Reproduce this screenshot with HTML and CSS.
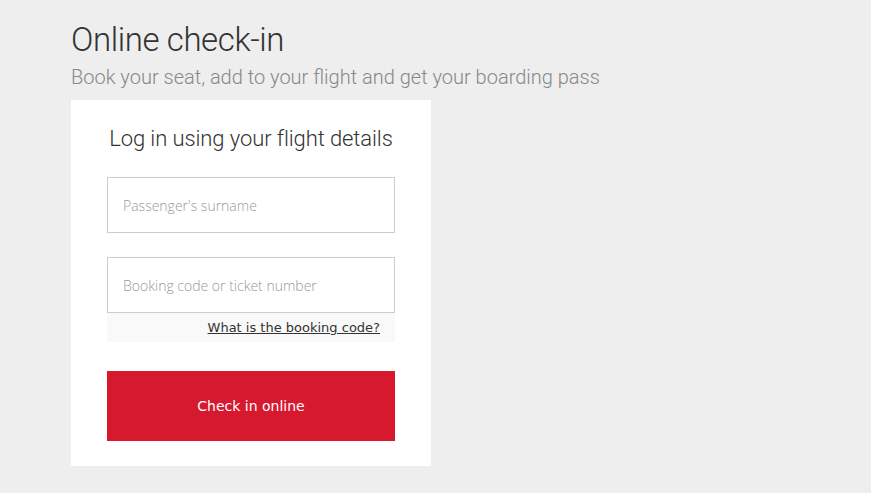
FILE: index.html
```html
<!DOCTYPE html>
<html lang="en">
<head>
<meta charset="utf-8">
<title>Online check-in</title>
<link rel="stylesheet" href="styles.css">
</head>
<body>
<main class="page">
  <h1 class="title">Online check-in</h1>
  <p class="subtitle">Book your seat, add to your flight and get your boarding pass</p>
  <section class="card">
    <h2 class="card-title">Log in using your flight details</h2>
    <form class="form">
      <input class="field" type="text" placeholder="Passenger's surname">
      <div class="field-group">
        <input class="field" type="text" placeholder="Booking code or ticket number">
        <div class="help"><a href="#" class="help-link">What is the booking code?</a></div>
      </div>
      <button type="button" class="submit">Check in online</button>
    </form>
  </section>
</main>
</body>
</html>
```
FILE: styles.css
```css
html, body {
  margin: 0;
  padding: 0;
  background: #eeeeee;
}
body {
  font-family: Roboto, "Open Sans", sans-serif;
}
.page {
  padding: 18px 0 0 71px;
  width: 600px;
}
.title {
  margin: 0;
  font-weight: 300;
  font-size: 33px;
  letter-spacing: -0.4px;
  line-height: 44px;
  color: #333333;
}
.subtitle {
  margin: 0 0 8px;
  font-weight: 300;
  font-size: 20px;
  line-height: 30px;
  color: #888888;
}
.card {
  width: 288px;
  background: #ffffff;
  padding: 24px 36px 25px;
}
.card-title {
  margin: 0 0 23px;
  text-align: center;
  white-space: nowrap;
  font-weight: 300;
  font-size: 22px;
  letter-spacing: -0.1px;
  line-height: 30px;
  color: #333333;
}
.form {
  display: flex;
  flex-direction: column;
  gap: 24px;
}
.field {
  box-sizing: border-box;
  display: block;
  width: 100%;
  height: 56px;
  margin: 0;
  padding: 0 15px;
  border: 1px solid #cccccc;
  border-radius: 0;
  background: #ffffff;
  font-family: "Open Sans", sans-serif;
  font-weight: 300;
  font-size: 14px;
  color: #333;
  outline: none;
}
.field::placeholder {
  color: #999999;
}
.help {
  height: 29px;
  background: #f9f9f9;
  display: flex;
  justify-content: flex-end;
  align-items: center;
  padding-right: 15px;
}
.help-link {
  font-family: "DejaVu Sans", Verdana, sans-serif;
  font-size: 13px;
  color: #333333;
  text-decoration: underline;
}
.field-group {
  margin-bottom: 5px;
}
.submit {
  display: block;
  width: 100%;
  height: 70px;
  border: 0;
  border-radius: 0;
  background: #d6192e;
  color: #ffffff;
  font-family: "DejaVu Sans", Verdana, sans-serif;
  font-size: 14px;
  cursor: pointer;
}
```
